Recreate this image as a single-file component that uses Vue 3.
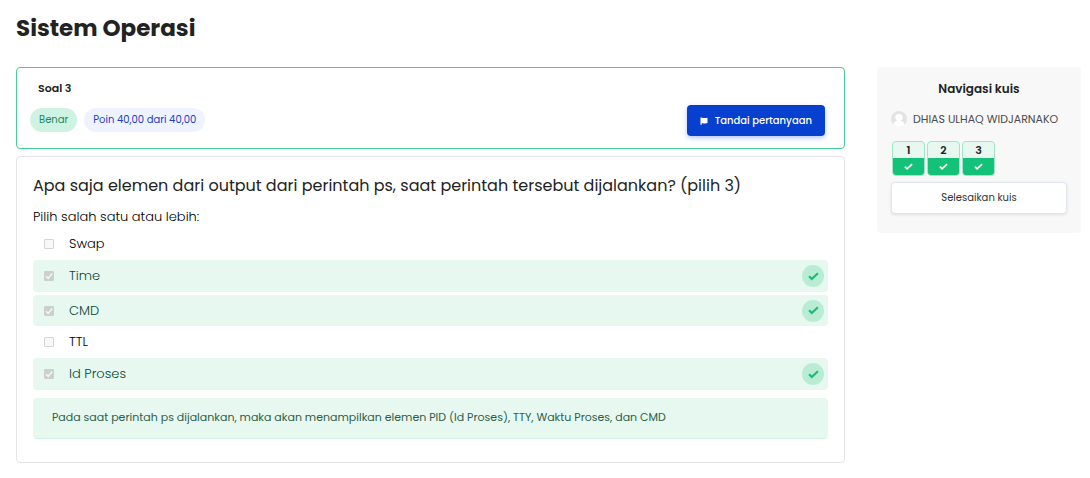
<script setup>
const answers = [
  { id: 'a', text: 'Swap', correct: false },
  { id: 'b', text: 'Time', correct: true },
  { id: 'c', text: 'CMD', correct: true },
  { id: 'd', text: 'TTL', correct: false },
  { id: 'e', text: 'Id Proses', correct: true },
]
const questions = [1, 2, 3]
</script>

<template>
  <div class="page">
    <h1>Sistem Operasi</h1>
    <div class="columns">
      <main>
        <section class="info">
          <div>
            <h2>Soal 3</h2>
            <div class="badges">
              <span class="badge state">Benar</span>
              <span class="badge points">Poin 40,00 dari 40,00</span>
            </div>
          </div>
          <button class="flag" type="button">
            <svg viewBox="0 0 16 16" aria-hidden="true">
              <path d="M1 1h2.400v1.100C6.500.8 8.500 3.600 15 1.300v10.800C9.500 14.500 7 11.300 3.400 12.600V15.500H1z" />
            </svg>
            Tandai pertanyaan
          </button>
        </section>

        <section class="question">
          <p class="prompt">Apa saja elemen dari output dari perintah ps, saat perintah tersebut dijalankan? (pilih 3)</p>
          <fieldset>
            <legend>Pilih salah satu atau lebih:</legend>
            <div v-for="a in answers" :key="a.id" class="answer" :class="{ correct: a.correct }">
              <span class="box">
                <input :id="a.id" type="checkbox" :checked="a.correct" disabled />
                <svg v-if="a.correct" viewBox="0 0 10 10" aria-hidden="true"><path d="M2 5.200l2.200 2.200L8.200 2.600" /></svg>
              </span>
              <label :for="a.id">{{ a.text }}</label>
              <span v-if="a.correct" class="mark">
                <svg viewBox="0 0 512 512" aria-hidden="true">
                  <path d="M50 245l125 125L462 105" />
                </svg>
              </span>
            </div>
          </fieldset>
          <p class="feedback">Pada saat perintah ps dijalankan, maka akan menampilkan elemen PID (Id Proses), TTY, Waktu Proses, dan CMD</p>
        </section>
      </main>

      <aside>
        <h3>Navigasi kuis</h3>
        <div class="user">
          <svg class="avatar" viewBox="0 0 16 16" aria-hidden="true">
            <circle cx="8" cy="8" r="8" fill="#e3e3e3" />
            <path d="M2.500 14c.2-2.600 1.500-3.800 3.700-4.200C4.600 8.600 4.100 7 4.300 5.700 4.500 3.800 6 2.700 8 2.700s3.500 1.100 3.700 3c.2 1.300-.3 2.900-1.900 4.100 2.200.4 3.500 1.600 3.700 4.200-3 2.600-8 2.600-11 0z" fill="#fff" />
          </svg>
          <span>DHIAS ULHAQ WIDJARNAKO</span>
        </div>
        <nav>
          <a v-for="n in questions" :key="n" href="#" class="tile">
            <span class="number">{{ n }}</span>
            <span class="done">
              <svg viewBox="0 0 512 512" aria-hidden="true">
                <path d="M50 265l125 125L462 125" />
              </svg>
            </span>
          </a>
        </nav>
        <button class="finish" type="button">Selesaikan kuis</button>
      </aside>
    </div>
  </div>
</template>

<style>
body {
  background: #fff;
}
</style>

<style scoped>
* {
  box-sizing: border-box;
}
.page {
  padding: 12px 9px 15px 16px;
  font-family: Poppins, Inter, "Open Sans", sans-serif;
  color: #222;
}
h1, h2, h3, p {
  margin: 0;
}
h1 {
  font-size: 23px;
  line-height: 32px;
  font-weight: 700;
}
.columns {
  display: grid;
  grid-template-columns: minmax(0, 1fr) 204px;
  gap: 32px;
  align-items: start;
  margin-top: 23px;
}
.info {
  display: flex;
  justify-content: space-between;
  align-items: flex-end;
  padding: 12px 19px 12px 13px;
  border: 1px solid #43d092;
  border-radius: 4px;
}
h2 {
  margin-left: 8px;
  font-size: 11px;
  line-height: 16px;
  font-weight: 600;
}
.badges {
  display: flex;
  gap: 7px;
  margin: 12px 0 4px;
}
.badge {
  padding: 0 9px;
  border-radius: 12px;
  font-size: 10px;
  line-height: 24px;
}
.state {
  background: #cff3e3;
  color: #24875a;
}
.points {
  background: #eff3ff;
  color: #2140c8;
}
button {
  font-family: inherit;
  cursor: pointer;
}
.flag {
  display: flex;
  align-items: center;
  gap: 7px;
  height: 31px;
  padding: 0 13px;
  border: 0;
  border-radius: 4px;
  background: #0740cf;
  color: #fff;
  font-size: 10px;
  font-weight: 500;
  box-shadow: 0 2px 5px rgba(7, 64, 207, 0.3);
}
.flag svg {
  width: 8px;
  height: 8px;
  fill: currentColor;
}
.question {
  margin-top: 7px;
  padding: 17px 16px 23px;
  border: 1px solid #e4e4e4;
  border-radius: 4px;
}
.prompt {
  margin-bottom: 8px;
  font-size: 16px;
  line-height: 24px;
  font-weight: 400;
}
fieldset {
  min-width: 0;
  margin: 0;
  padding: 0;
  border: 0;
}
legend {
  padding: 1px 0;
  color: #000;
  font-size: 13px;
  line-height: 20px;
  font-weight: 300;
}
.answer {
  display: flex;
  align-items: center;
  height: 32px;
  padding: 0 4px 0 11px;
  border-radius: 4px;
  color: #000;
  font-size: 13px;
  font-weight: 300;
}
.correct {
  background: #e7f8f0;
  color: #0b4a30;
}
.correct + .correct {
  height: 31px;
  margin-top: 3px;
}
.box {
  display: grid;
  width: 10px;
  height: 10px;
  margin-right: 15px;
}
.box > * {
  grid-area: 1 / 1;
}
.box input {
  appearance: none;
  width: 10px;
  height: 10px;
  margin: 0;
  border: 1px solid #d5d5d5;
  border-radius: 1px;
  background: #f8f8f8;
}
.box input:checked {
  border-color: #cbcfcd;
  background: #cbcfcd;
}
.box svg {
  z-index: 1;
  width: 10px;
  height: 10px;
  fill: none;
  stroke: #f3f7f5;
  stroke-width: 1.5;
}
.mark {
  display: grid;
  place-items: center;
  width: 22px;
  height: 22px;
  margin-left: auto;
  border-radius: 50%;
  background: #b8ecd5;
  color: #13bf76;
}
.mark svg,
.done svg {
  width: 11px;
  height: 11px;
  fill: none;
  stroke: currentColor;
  stroke-width: 100;
}
.feedback {
  margin-top: 8px;
  padding: 9px 18px 11px;
  border: 1px solid #e7f8f0;
  border-bottom-color: #d5f3e5;
  border-radius: 4px;
  background: #e7f8f0;
  color: #2a6049;
  font-size: 11px;
  line-height: 19px;
}
aside {
  padding: 13px 14px 19px;
  border-radius: 4px;
  background: #f8f8f8;
}
h3 {
  font-size: 12px;
  line-height: 18px;
  font-weight: 600;
  text-align: center;
}
.user {
  display: flex;
  align-items: center;
  gap: 6px;
  height: 16px;
  margin-top: 13px;
  color: #4b4b4b;
  font-size: 11px;
  white-space: nowrap;
}
.avatar {
  flex: none;
  width: 16px;
  height: 16px;
}
nav {
  display: flex;
  gap: 2px;
  margin: 14px 0 6px 1px;
}
.tile {
  width: 33px;
  height: 35px;
  overflow: hidden;
  border: 1px solid #a0e5c8;
  border-radius: 4px;
  background: #e7f8f0;
  color: #222;
  font-size: 11px;
  font-weight: 600;
  text-align: center;
  text-decoration: none;
}
.number {
  display: block;
  line-height: 16px;
}
.done {
  display: grid;
  place-items: center;
  height: 17px;
  background: #13c278;
  color: #fff;
}
.done svg {
  width: 9px;
  height: 9px;
}
.finish {
  width: 100%;
  height: 32px;
  border: 1px solid #e1e5f2;
  border-radius: 4px;
  background: #fff;
  color: #333;
  font-size: 10px;
  font-weight: 400;
  box-shadow: 0 1px 3px rgba(0, 0, 0, 0.1);
}
</style>
